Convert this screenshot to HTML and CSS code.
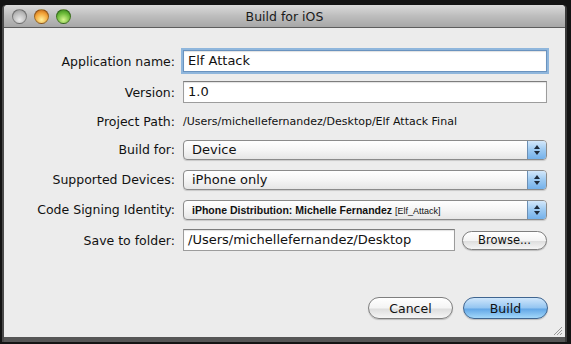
FILE: index.html
```html
<!DOCTYPE html>
<html lang="en">
<head>
    <meta charset="UTF-8">
    <title>Build for iOS</title>
    <link rel="stylesheet" href="styles.css">
</head>
<body>

<div class="window">
    <div class="titlebar">
        <div class="lights">
            <span class="light light-off"></span>
            <span class="light light-min"></span>
            <span class="light light-zoom"></span>
        </div>
        <div class="title">Build for iOS</div>
    </div>

    <div class="content">
        <div class="form">
            <label class="label">Application name:</label>
            <div class="field focused">Elf Attack</div>

            <label class="label">Version:</label>
            <div class="field">1.0</div>

            <label class="label">Project Path:</label>
            <div class="path">/Users/michellefernandez/Desktop/Elf Attack Final</div>

            <label class="label">Build for:</label>
            <div class="select">
                <span class="select-text">Device</span>
                <span class="stepper"><i class="up"></i><i class="down"></i></span>
            </div>

            <label class="label">Supported Devices:</label>
            <div class="select">
                <span class="select-text">iPhone only</span>
                <span class="stepper"><i class="up"></i><i class="down"></i></span>
            </div>

            <label class="label">Code Signing Identity:</label>
            <div class="select">
                <span class="select-text small"><b>iPhone Distribution: Michelle Fernandez</b> <span class="tag">[Elf_Attack]</span></span>
                <span class="stepper"><i class="up"></i><i class="down"></i></span>
            </div>

            <label class="label">Save to folder:</label>
            <div class="folder-row">
                <div class="field grow">/Users/michellefernandez/Desktop</div>
                <button class="btn small-btn">Browse...</button>
            </div>
        </div>

        <div class="actions">
            <button class="btn">Cancel</button>
            <button class="btn primary">Build</button>
        </div>

        <svg class="grip" width="10" height="10" viewBox="0 0 10 10">
            <path d="M9 1 L1 9 M9 4 L4 9 M9 7 L7 9" stroke="#9a9a9a" stroke-width="1"/>
        </svg>
    </div>
</div>

</body>
</html>
```

FILE: styles.css
```css
body {
    margin: 0;
    width: 571px;
    height: 344px;
    background-color: #141414;
    font-family: "DejaVu Sans", Verdana, sans-serif;
    color: #111;
    overflow: hidden;
}

.window {
    margin: 5px 0 0 4px;
    width: 561px;
    height: 332px;
    display: flex;
    flex-direction: column;
    background: #ececec;
    border-bottom: 5px solid #565656;
    box-shadow: -2px 0 0 #4a4a4a, 2px 0 0 #3a3a3a;
    border-radius: 4px 4px 0 0;
}

.titlebar {
    position: relative;
    height: 22px;
    flex: none;
    background: linear-gradient(#dadada, #bdbdbd 50%, #a7a7a7);
    border-bottom: 1px solid #5d5d5d;
    border-radius: 4px 4px 0 0;
    display: flex;
    align-items: center;
    justify-content: center;
}

.lights {
    position: absolute;
    left: 8px;
    top: 4px;
    display: flex;
    gap: 7px;
}

.light {
    width: 13px;
    height: 13px;
    border-radius: 50%;
    border: 1px solid rgba(0, 0, 0, 0.35);
}

.light-off {
    background: radial-gradient(circle at 50% 75%, #eaeaea, #b9b9b9 60%, #8c8c8c);
}

.light-min {
    background: radial-gradient(circle at 50% 75%, #fff09a, #f3a53a 55%, #b85a10);
}

.light-zoom {
    background: radial-gradient(circle at 50% 75%, #d6f58f, #6dbb3a 55%, #2e7d16);
}

.title {
    font-size: 12.5px;
    color: #1a1a1a;
    padding-top: 1px;
}

.content {
    position: relative;
    flex: 1;
    display: flex;
    flex-direction: column;
}

.form {
    display: grid;
    grid-template-columns: 171px 364px;
    grid-template-rows: 22px 22px 18px 21px 21px 21px 22px;
    column-gap: 8px;
    row-gap: 9px;
    align-items: center;
    padding-top: 22px;
}

.label {
    text-align: right;
    font-size: 12.5px;
    white-space: nowrap;
}

.field {
    height: 22px;
    box-sizing: border-box;
    background: #fff;
    border: 1px solid #9c9c9c;
    border-top-color: #7d7d7d;
    box-shadow: inset 0 1px 1px rgba(0, 0, 0, 0.12);
    font-size: 13px;
    line-height: 20px;
    padding-left: 4px;
    white-space: nowrap;
    overflow: hidden;
}

.field.focused {
    border-color: #6a93bf;
    box-shadow: 0 0 0 2px #8fb6dc, inset 0 1px 1px rgba(0, 0, 0, 0.12);
}

.path {
    font-size: 11px;
    white-space: nowrap;
}

.select {
    height: 20px;
    box-sizing: border-box;
    display: flex;
    border: 1px solid #8b8b8b;
    border-radius: 4px;
    background: linear-gradient(#ffffff, #f5f5f5 50%, #e6e6e6);
    box-shadow: 0 1px 1px rgba(0, 0, 0, 0.15);
    overflow: hidden;
}

.select-text {
    flex: 1;
    font-size: 13px;
    line-height: 18px;
    padding-left: 8px;
    white-space: nowrap;
}

.select-text.small {
    font-family: "Liberation Sans", Arial, sans-serif;
    font-size: 10.5px;
}

.tag {
    font-size: 9px;
}

.stepper {
    width: 18px;
    flex: none;
    border-left: 1px solid #6c8fb4;
    background: linear-gradient(#d4e8fa, #9cc9f1 50%, #74b1ea);
    display: flex;
    flex-direction: column;
    align-items: center;
    justify-content: center;
    gap: 2px;
}

.stepper i {
    width: 0;
    height: 0;
    border-left: 3px solid transparent;
    border-right: 3px solid transparent;
}

.stepper .up {
    border-bottom: 4px solid #1e2a3a;
}

.stepper .down {
    border-top: 4px solid #1e2a3a;
}

.folder-row {
    display: flex;
    align-items: center;
    gap: 7px;
}

.grow {
    flex: 1;
}

.btn {
    width: 85px;
    height: 22px;
    border: 1px solid #7f7f7f;
    border-radius: 11px;
    background: linear-gradient(#ffffff, #f4f4f4 50%, #dedede 55%, #f5f5f5);
    box-shadow: 0 1px 1px rgba(0, 0, 0, 0.2);
    font-family: "DejaVu Sans", Verdana, sans-serif;
    font-size: 12.5px;
    color: #111;
    padding: 0;
}

.small-btn {
    height: 19px;
    width: 85px;
    font-size: 11.5px;
}

.btn.primary {
    border-color: #3f6590;
    background: linear-gradient(#cfe6fb, #93c5f1 50%, #62a6e6 55%, #a3d8fa);
}

.actions {
    display: flex;
    justify-content: flex-end;
    gap: 10px;
    padding-right: 17px;
    margin-top: 46px;
}

.grip {
    position: absolute;
    right: 2px;
    bottom: 1px;
}
```
